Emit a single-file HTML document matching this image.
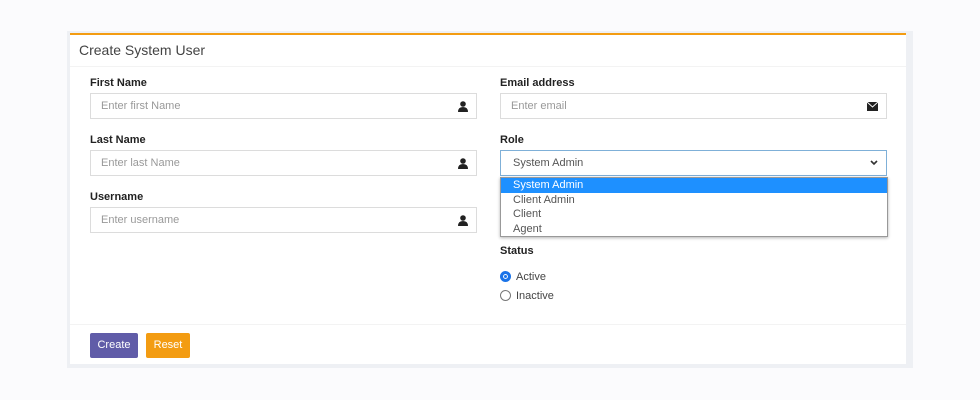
<!DOCTYPE html>
<html><head><style>
body{margin:0;width:980px;height:400px;background:#fbfbfd;font-family:"Liberation Sans",sans-serif;position:relative;overflow:hidden}
.frame{position:absolute;left:67px;top:31px;width:846px;height:337px;background:#eef0f4}
.card{position:absolute;left:70px;top:33px;width:836px;height:331px;background:#fff;border-top:2px solid #f39c12;box-sizing:border-box}
.hd{position:absolute;left:0;top:0;width:100%;height:31px;border-bottom:1px solid #f3f3f3}
.hd span{position:absolute;left:9px;top:7px;font-size:14px;color:#444}
.lbl{position:absolute;font-size:11px;font-weight:bold;color:#222}
.inp{position:absolute;width:387px;height:26px;border:1px solid #dcdcdc;box-sizing:border-box;font-size:11px;color:#999}
.inp span{position:absolute;left:10px;top:6px}
.ic{position:absolute;right:8px;top:7px}
.ft{position:absolute;left:0;top:289px;width:100%;border-top:1px solid #f3f3f3}
.btn{position:absolute;top:298px;height:25px;font-size:11px;color:#fff;border-radius:2px;text-align:center;line-height:25px}
.dd{position:absolute;left:430px;top:142px;width:388px;height:60px;border:1px solid #999;box-sizing:border-box;background:#fff;box-shadow:0 1px 3px rgba(0,0,0,.3);font-size:11px;color:#555}
.dd div{height:14.6px;line-height:14.6px;padding-left:12px}
.r{position:absolute;left:430px;font-size:11px;color:#444}
.r i{display:inline-block;width:11px;height:11px;border:1px solid #777;border-radius:50%;vertical-align:-2px;margin-right:5px;box-sizing:border-box}
</style></head><body>
<div class="frame"></div>
<div class="card">
<div class="hd"><span>Create System User</span></div>
<div class="lbl" style="left:20px;top:42px">First Name</div>
<div class="inp" style="left:20px;top:58px"><span>Enter first Name</span><svg class="ic" width="10" height="11" viewBox="0 0 10 11"><circle cx="5" cy="3" r="2.8" fill="#222"/><path d="M0 11 Q0 6 5 6 Q10 6 10 11Z" fill="#222"/></svg></div>
<div class="lbl" style="left:20px;top:99px">Last Name</div>
<div class="inp" style="left:20px;top:115px"><span>Enter last Name</span><svg class="ic" width="10" height="11" viewBox="0 0 10 11"><circle cx="5" cy="3" r="2.8" fill="#222"/><path d="M0 11 Q0 6 5 6 Q10 6 10 11Z" fill="#222"/></svg></div>
<div class="lbl" style="left:20px;top:156px">Username</div>
<div class="inp" style="left:20px;top:172px"><span>Enter username</span><svg class="ic" width="10" height="11" viewBox="0 0 10 11"><circle cx="5" cy="3" r="2.8" fill="#222"/><path d="M0 11 Q0 6 5 6 Q10 6 10 11Z" fill="#222"/></svg></div>
<div class="lbl" style="left:430px;top:42px">Email address</div>
<div class="inp" style="left:430px;top:58px"><span>Enter email</span><svg class="ic" width="11" height="9" viewBox="0 0 11 9" style="top:8px"><rect width="11" height="9" fill="#222"/><path d="M0 0 L5.5 5 L11 0" stroke="#fff" fill="none" stroke-width="1"/></svg></div>
<div class="lbl" style="left:430px;top:99px">Role</div>
<div class="inp" style="left:430px;top:115px;border-color:#7fb0d8;color:#555"><span style="left:12px">System Admin</span><svg class="ic" width="8" height="6" viewBox="0 0 8 6" style="top:9px"><path d="M1 1 L4 4 L7 1" stroke="#333" stroke-width="1.6" fill="none"/></svg></div>
<div class="dd"><div style="background:#1e90ff;color:#fff">System Admin</div><div>Client Admin</div><div>Client</div><div>Agent</div></div>
<div class="lbl" style="left:430px;top:210px">Status</div>
<div class="r" style="top:236px"><i style="border:3px solid #1a73e8;box-shadow:inset 0 0 0 1px #fff;background:#1a73e8"></i>Active</div>
<div class="r" style="top:255px"><i></i>Inactive</div>
<div class="ft"></div>
<div class="btn" style="left:20px;width:48px;background:#605ca8">Create</div>
<div class="btn" style="left:76px;width:44px;background:#f39c12">Reset</div>
</div>
</body></html>
